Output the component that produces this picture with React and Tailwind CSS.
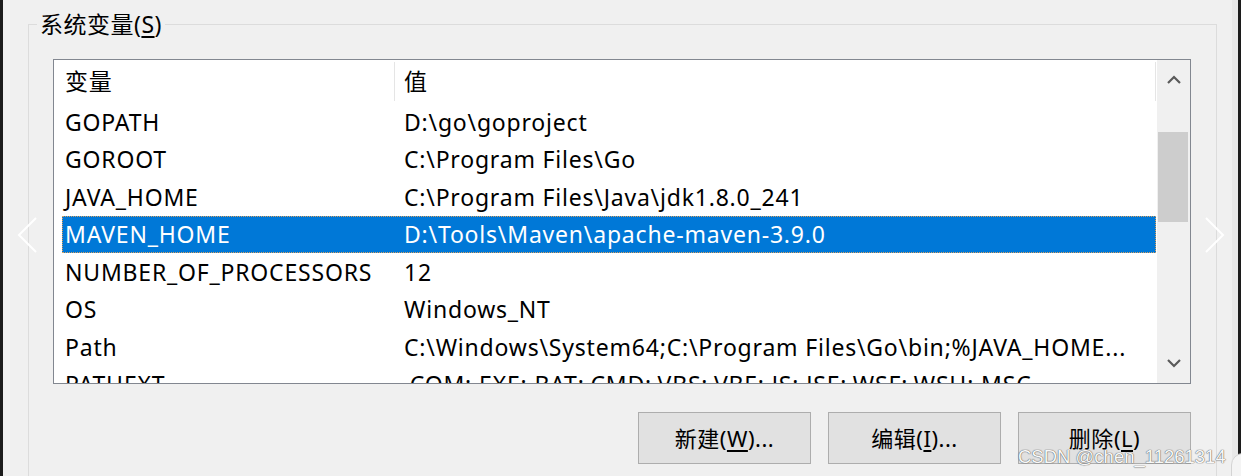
import React from "react";

const rows = [
  ["GOPATH", "D:\\go\\goproject"],
  ["GOROOT", "C:\\Program Files\\Go"],
  ["JAVA_HOME", "C:\\Program Files\\Java\\jdk1.8.0_241"],
  ["MAVEN_HOME", "D:\\Tools\\Maven\\apache-maven-3.9.0", true],
  ["NUMBER_OF_PROCESSORS", "12"],
  ["OS", "Windows_NT"],
  ["Path", "C:\\Windows\\System64;C:\\Program Files\\Go\\bin;%JAVA_HOME..."],
  ["PATHEXT", ".COM;.EXE;.BAT;.CMD;.VBS;.VBE;.JS;.JSE;.WSF;.WSH;.MSC"],
];

function Chevron({ dir }) {
  const d = dir === "up" ? "M1 8 L7 2 L13 8" : "M1 2 L7 8 L13 2";
  return (
    <svg width="14" height="10" viewBox="0 0 14 10">
      <path d={d} fill="none" stroke="#5a5a5a" strokeWidth="2.2" />
    </svg>
  );
}

function Btn({ label, k, tail }) {
  return (
    <div className="w-[173px] h-[52px] bg-[#e1e1e1] border border-[#adadad] flex items-center justify-center text-[22px] tracking-[0.5px] text-black">
      <span>
        {label}(<span className="underline underline-offset-[3px]">{k}</span>){tail}
      </span>
    </div>
  );
}

export default function App() {
  return (
    <div
      className="relative w-[1241px] h-[476px] overflow-hidden bg-[#f0f0f0] flex"
      style={{ fontFamily: '"Noto Sans", "Noto Sans CJK SC", sans-serif' }}
    >
      <div className="w-[3px] shrink-0 bg-[#1c1c1c]" />
      <div className="flex-1 pl-[25px] pt-[24px]">
        <div className="relative w-[1189px] h-[470px] border-l border-t border-r border-[#dcdcdc] pt-[34px] px-[24px]">
          <div className="absolute left-[8px] top-[-16px] px-[3px] bg-[#f0f0f0] text-[23px] leading-[30px] tracking-[0.5px] text-black">
            系统变量(<span className="underline underline-offset-[3px]">S</span>)
          </div>
          <div className="w-[1138px] h-[325px] border border-[#828790] bg-white flex">
            <div className="flex-1 pl-[8px] pr-[1px] overflow-hidden flex flex-col text-[23px] tracking-[0.8px] text-black">
              <div className="h-[43px] shrink-0 flex items-center">
                <div className="w-[332px] pl-[3px]">变量</div>
                <div className="w-px h-[39px] self-start mt-[2px] bg-[#e5e5e5]" />
                <div className="flex-1 pl-[9px]">值</div>
                <div className="w-px h-[39px] self-start mt-[2px] bg-[#e5e5e5]" />
              </div>
              {rows.map(([n, v, sel]) => (
                <div
                  key={n}
                  className={
                    "h-[37.5px] shrink-0 flex items-center whitespace-nowrap " +
                    (sel ? "bg-[#0078d7] text-white outline-1 outline-dotted outline-offset-[-1px] outline-[#d8a060]" : "")
                  }
                >
                  <div className="w-[342px] pl-[3px] shrink-0">{n}</div>
                  <div>{v}</div>
                </div>
              ))}
            </div>
            <div className="w-[33px] shrink-0 bg-[#f0f0f0] flex flex-col">
              <div className="h-[40px] flex items-center justify-center">
                <Chevron dir="up" />
              </div>
              <div className="h-[32px]" />
              <div className="h-[90px] w-[30px] ml-[1px] bg-[#cdcdcd]" />
              <div className="flex-1" />
              <div className="h-[40px] flex items-center justify-center">
                <Chevron dir="down" />
              </div>
            </div>
          </div>
          <div className="w-[1138px] mt-[28px] flex justify-end gap-[17px]">
            <Btn label="新建" k="W" tail="..." />
            <Btn label="编辑" k="I" tail="..." />
            <Btn label="删除" k="L" tail="" />
          </div>
        </div>
      </div>
      <div className="w-[6px] shrink-0 bg-[#e8e8e8]" />
      <div className="w-[3px] shrink-0 bg-[#1c1c1c]" />

      <svg className="absolute left-[16px] top-[216px]" width="22" height="38" viewBox="0 0 22 38">
        <path d="M20 2 L3 19 L20 36" fill="none" stroke="#ffffff" strokeWidth="2" />
      </svg>
      <svg className="absolute left-[1204px] top-[216px]" width="22" height="38" viewBox="0 0 22 38">
        <path d="M2 2 L19 19 L2 36" fill="none" stroke="#ffffff" strokeWidth="2" />
      </svg>
      <div className="absolute left-[1231px] top-[453px] w-[20px] h-[40px] rounded-tl-[12px] border border-[#d4d4d4] bg-[#f4f4f4]" />
      <div
        className="absolute left-[1018px] top-[445px] text-[18.5px] leading-[24px] text-[#f8f8f8] whitespace-nowrap [text-shadow:0_0_1px_#555,0_0_1px_#555]"
        style={{ fontFamily: '"Liberation Sans", Arial, sans-serif' }}
      >
        CSDN @chen_11261314
      </div>
    </div>
  );
}
